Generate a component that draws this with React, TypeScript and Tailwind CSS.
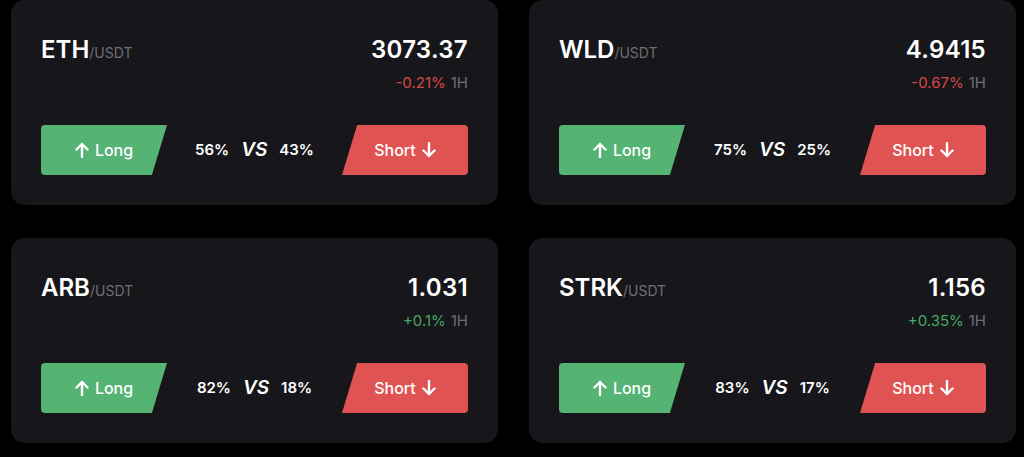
import React from "react";

type Pair = {
  base: string;
  price: string;
  change: string;
  up: boolean;
  long: string;
  short: string;
};

const pairs: Pair[] = [
  { base: "ETH", price: "3073.37", change: "-0.21%", up: false, long: "56%", short: "43%" },
  { base: "WLD", price: "4.9415", change: "-0.67%", up: false, long: "75%", short: "25%" },
  { base: "ARB", price: "1.031", change: "+0.1%", up: true, long: "82%", short: "18%" },
  { base: "STRK", price: "1.156", change: "+0.35%", up: true, long: "83%", short: "17%" },
];

function ArrowUp() {
  return (
    <svg width="14" height="16" viewBox="0 0 14 16" fill="none" stroke="currentColor" strokeWidth="2.4" strokeLinecap="round" strokeLinejoin="round">
      <path d="M7 15V2" />
      <path d="M1.5 7.5L7 2l5.5 5.5" />
    </svg>
  );
}

function ArrowDown() {
  return (
    <svg width="14" height="16" viewBox="0 0 14 16" fill="none" stroke="currentColor" strokeWidth="2.4" strokeLinecap="round" strokeLinejoin="round">
      <path d="M7 1v13" />
      <path d="M1.5 8.5L7 14l5.5-5.5" />
    </svg>
  );
}

function Card({ p }: { p: Pair }) {
  return (
    <div className="h-[205px] rounded-[14px] bg-[#17171b] px-[30px] pt-[34px]">
      <div className="flex items-start justify-between">
        <div className="flex items-baseline">
          <span className="text-[24px] leading-[32px] font-semibold text-white">{p.base}</span>
          <span className="text-[14px] text-[#6e6e74]">/USDT</span>
        </div>
        <div className="flex flex-col items-end">
          <span className="text-[24px] leading-[32px] font-semibold tracking-[0.3px] text-white">{p.price}</span>
          <span className="mt-[6px] text-[15px] leading-[22px]">
            <span className={p.up ? "text-[#45a866]" : "text-[#d94848]"}>{p.change}</span>
            <span className="ml-[5px] text-[#6e6e74]">1H</span>
          </span>
        </div>
      </div>
      <div className="mt-[31px] flex h-[50px] items-center">
        <div className="flex h-[50px] w-[126px] items-center justify-center gap-[6px] rounded-l-[4px] bg-[#55b374] text-[16px] font-medium text-white [clip-path:polygon(0_0,100%_0,88%_100%,0_100%)]">
          <ArrowUp />
          <span>Long</span>
        </div>
        <div className="flex flex-1 items-center justify-center gap-[12px] text-white">
          <span className="text-[15px] font-semibold">{p.long}</span>
          <span className="text-[19px] font-semibold italic">VS</span>
          <span className="text-[15px] font-semibold">{p.short}</span>
        </div>
        <div className="flex h-[50px] w-[126px] items-center justify-center gap-[6px] rounded-r-[4px] bg-[#e05353] text-[16px] font-medium text-white [clip-path:polygon(12%_0,100%_0,100%_100%,0_100%)]">
          <span>Short</span>
          <ArrowDown />
        </div>
      </div>
    </div>
  );
}

export default function App() {
  return (
    <div className="h-[457px] w-[1024px] overflow-hidden bg-black" style={{ fontFamily: "Inter, 'Noto Sans', sans-serif" }}>
      <div className="grid grid-cols-[487px_487px] gap-x-[31px] gap-y-[33px] pl-[11px]">
        {pairs.map((p) => (
          <Card key={p.base} p={p} />
        ))}
      </div>
    </div>
  );
}
